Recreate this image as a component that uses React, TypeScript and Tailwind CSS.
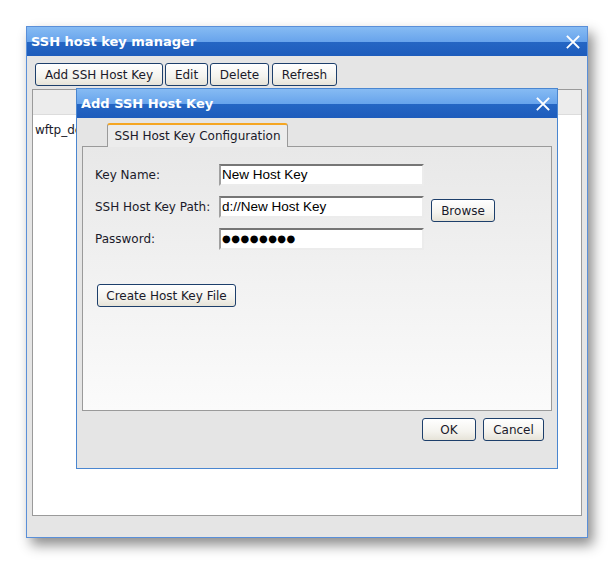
import React from "react";

const font = { fontFamily: '"DejaVu Sans", Verdana, sans-serif' };

function CloseX() {
  return (
    <svg width="14" height="14" viewBox="0 0 14 14" className="block">
      <path d="M1.5 1.5 L12.5 12.5 M12.5 1.5 L1.5 12.5" stroke="white" strokeWidth="1.8" strokeLinecap="square" />
    </svg>
  );
}

function TitleBar({ title }: { title: string }) {
  return (
    <div className="h-[29px] flex items-center justify-between pl-[4px] pr-[7px] bg-[linear-gradient(to_bottom,#86bbf3_0%,#68a4ec_50%,#2566c4_52%,#1e5cbc_100%)]">
      <span className="text-white font-bold text-[13px] leading-none">{title}</span>
      <CloseX />
    </div>
  );
}

function Btn({ children, className = "" }: { children: React.ReactNode; className?: string }) {
  return (
    <div
      className={
        "h-[23px] flex items-center justify-center rounded-[3px] border border-[#1d3f6b] bg-[linear-gradient(to_bottom,#ffffff_0%,#f4f3ee_60%,#e6e3d8_100%)] text-[12px] text-[#1a1a2a] leading-none " +
        className
      }
    >
      {children}
    </div>
  );
}

function Field({ value, dots = false }: { value: string; dots?: boolean }) {
  return (
    <div
      className={
        "w-[205px] h-[22px] shrink-0 bg-white border-2 border-t-[#767676] border-l-[#a0a0a0] border-r-[#ececec] border-b-[#ececec] flex items-center pl-[1px] text-black leading-none " +
        (dots ? "text-[10px] tracking-[0.5px]" : "text-[13.5px]")
      }
      style={dots ? undefined : { fontFamily: '"Liberation Sans", Arial, sans-serif' }}
    >
      {value}
    </div>
  );
}

export default function App() {
  return (
    <div className="w-[613px] h-[564px] bg-white relative overflow-hidden" style={font}>
      {/* main window */}
      <div className="absolute left-[26px] top-[26px] w-[562px] h-[512px] border border-[#5a8fd8] bg-[#e5e5e5] shadow-[5px_7px_12px_rgba(0,0,0,0.45)] flex flex-col">
        <TitleBar title="SSH host key manager" />
        <div className="flex gap-[2px] pl-[8px] pt-[7px]">
          <Btn className="w-[128px]">Add SSH Host Key</Btn>
          <Btn className="w-[43px]">Edit</Btn>
          <Btn className="w-[59px]">Delete</Btn>
          <Btn className="w-[65px] ml-[1px]">Refresh</Btn>
        </div>
        <div className="ml-[5px] mt-[3px] w-[550px] h-[427px] border border-[#9a9a9a] bg-white flex flex-col">
          <div className="h-[25px] bg-[#ececec] border-b border-[#dcdcdc]" />
          <div className="pl-[2px] pt-[9px] text-[12px] text-[#1a1a2a] leading-none">wftp_default</div>
        </div>
      </div>

      {/* dialog */}
      <div className="absolute left-[76px] top-[88px] w-[482px] h-[381px] border border-[#4a86d0] bg-[#e5e5e5] flex flex-col">
        <TitleBar title="Add SSH Host Key" />
        <div className="mx-[5px] mt-[5px] flex flex-col">
          <div className="flex pl-[25px]">
            <div className="h-[24px] w-[181px] rounded-t-[3px] border-t-2 border-t-[#f5a623] border-x border-x-[#9a9a9a] bg-[#ececec] flex items-center justify-center text-[12px] text-[#1a1a2a] leading-none -mb-px relative z-10">
              SSH Host Key Configuration
            </div>
          </div>
          <div className="w-[470px] h-[265px] border border-[#9a9a9a] bg-[linear-gradient(to_bottom,#e8e8e8_0%,#fbfbfb_100%)] pl-[12px] pt-[17px] flex flex-col">
            <div className="flex flex-col gap-[10px]">
              <div className="flex items-center h-[22px]">
                <span className="w-[124px] text-[12px] text-[#1a1a2a] leading-none">Key Name:</span>
                <Field value="New Host Key" />
              </div>
              <div className="flex items-start h-[22px]">
                <span className="w-[124px] self-center text-[12px] text-[#1a1a2a] leading-none">SSH Host Key Path:</span>
                <Field value="d://New Host Key" />
                <Btn className="w-[64px] h-[22px] ml-[7px] mt-[3px] shrink-0">Browse</Btn>
              </div>
              <div className="flex items-center h-[22px]">
                <span className="w-[124px] text-[12px] text-[#1a1a2a] leading-none">Password:</span>
                <Field value="●●●●●●●●" dots />
              </div>
            </div>
            <Btn className="w-[139px] ml-[2px] mt-[34px]">Create Host Key File</Btn>
          </div>
          <div className="flex justify-end gap-[7px] pr-[8px] pt-[7px]">
            <Btn className="w-[54px]">OK</Btn>
            <Btn className="w-[61px]">Cancel</Btn>
          </div>
        </div>
      </div>
    </div>
  );
}
